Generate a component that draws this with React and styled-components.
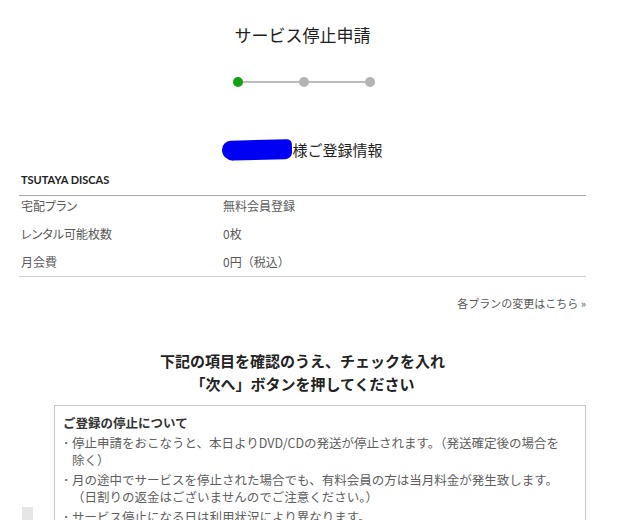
import {Fragment} from 'react'
import styled, {createGlobalStyle} from 'styled-components'

const GlobalStyle = createGlobalStyle`
  html, body {
    margin: 0;
    padding: 0;
    background: #fff;
  }
  body {
    font-family: 'Noto Sans CJK JP', 'Noto Sans', sans-serif;
    color: #222;
  }
`

const Page = styled.main`
  width: 567px;
  margin-left: 19px;
  padding-top: 22px;
  padding-bottom: 40px;
`

const Title = styled.h1`
  margin: 0;
  font-size: 17px;
  line-height: 26px;
  font-weight: normal;
  text-align: center;
  color: #1e1e1e;
`

const Stepper = styled.ol`
  display: flex;
  align-items: center;
  justify-content: center;
  list-style: none;
  margin: 29px 0 0 0;
  padding: 0 0 0 2px;
  height: 10px;
`

const Dot = styled.li`
  width: 10px;
  height: 10px;
  border-radius: 50%;
  background: ${(p) => (p.$active ? '#13a113' : '#b4b4b4')};
`

const Bar = styled.li`
  width: 56px;
  height: 2px;
  background: #bdbdbd;
`

const UserHeading = styled.h2`
  margin: 52px 0 0 0;
  display: flex;
  justify-content: center;
  align-items: center;
  font-size: 15px;
  line-height: 22px;
  font-weight: normal;
  color: #1e1e1e;
`

const Masked = styled.span`
  display: inline-block;
  width: 70px;
  height: 20px;
  background: #0000f2;
  border-radius: 9px 5px 7px 11px;
  transform: rotate(-1.5deg);
`

const Brand = styled.div`
  margin-top: 11px;
  padding: 0 0 7px 2px;
  border-bottom: 1px solid #a8a8a8;
  font-family: Lato, 'Noto Sans', sans-serif;
  font-weight: bold;
  font-size: 11px;
  line-height: 16px;
  color: #222;
`

const PlanTable = styled.dl`
  margin: 0;
  padding: 0 0 4px 2px;
  border-bottom: 1px solid #cfcfcf;
  display: grid;
  grid-template-columns: 202px 1fr;
  row-gap: 8px;
  font-size: 12px;
  line-height: 20px;
  color: #5a5a5a;

  > dt, > dd {
    margin: 0;
  }
`

const Label = styled.dt`
  font-feature-settings: 'palt';
`

const LinkRow = styled.div`
  margin-top: 18px;
  text-align: right;
  font-size: 11px;
  line-height: 16px;

  > a {
    color: #5a5a5a;
    text-decoration: none;
  }
`

const Lead = styled.p`
  margin: 38px 0 0 0;
  text-align: center;
  font-size: 15px;
  line-height: 23px;
  font-weight: bold;
  color: #222;
`

const NoticeRow = styled.div`
  display: grid;
  grid-template-columns: 35px 1fr;
  margin-top: 10px;
`

const Marker = styled.span`
  display: block;
  margin: 102px 0 0 3px;
  width: 11px;
  height: 16px;
  background: #e6e6e6;
`

const Notice = styled.section`
  border: 1px solid #c9c9c9;
  padding: 8px 16px 12px 8px;
  color: #5e5e5e;
  font-size: 12.5px;

  > h3 {
    margin: 0;
    font-size: 12.5px;
    line-height: 18px;
    font-weight: bold;
    color: #333;
  }
`

const Bullets = styled.ul`
  list-style: none;
  margin: 2px 0 0 0;
  padding: 0;
  display: flex;
  flex-direction: column;
  gap: 3px;
`

const Bullet = styled.li`
  padding-left: 9px;
  line-height: 17px;

  &::before {
    content: '･';
    display: inline-block;
    width: 9px;
    margin-left: -9px;
  }
`

const plan = [
  ['宅配プラン', '無料会員登録'],
  ['レンタル可能枚数', '0枚'],
  ['月会費', '0円（税込）'],
]

const App = () => {
  return (
    <>
      <GlobalStyle />
      <Page>
        <Title>サービス停止申請</Title>
        <Stepper>
          <Dot $active />
          <Bar />
          <Dot />
          <Bar />
          <Dot />
        </Stepper>

        <UserHeading>
          <Masked />
          様ご登録情報
        </UserHeading>

        <Brand>TSUTAYA DISCAS</Brand>
        <PlanTable>
          {plan.map(([label, value]) => (
            <Fragment key={label}>
              <Label>{label}</Label>
              <dd>{value}</dd>
            </Fragment>
          ))}
        </PlanTable>
        <LinkRow>
          <a href="#plan">各プランの変更はこちら »</a>
        </LinkRow>

        <Lead>
          下記の項目を確認のうえ、チェックを入れ
          <br />
          「次へ」ボタンを押してください
        </Lead>

        <NoticeRow>
          <div>
            <Marker />
          </div>
          <Notice>
            <h3>ご登録の停止について</h3>
            <Bullets>
              <Bullet>停止申請をおこなうと、本日よりDVD/CDの発送が停止されます。（発送確定後の場合を除く）</Bullet>
              <Bullet>
                月の途中でサービスを停止された場合でも、有料会員の方は当月料金が発生致します。
                <br />
                （日割りの返金はございませんのでご注意ください。）
              </Bullet>
              <Bullet>サービス停止になる日は利用状況により異なります。</Bullet>
            </Bullets>
          </Notice>
        </NoticeRow>
      </Page>
    </>
  )
}

export default App
